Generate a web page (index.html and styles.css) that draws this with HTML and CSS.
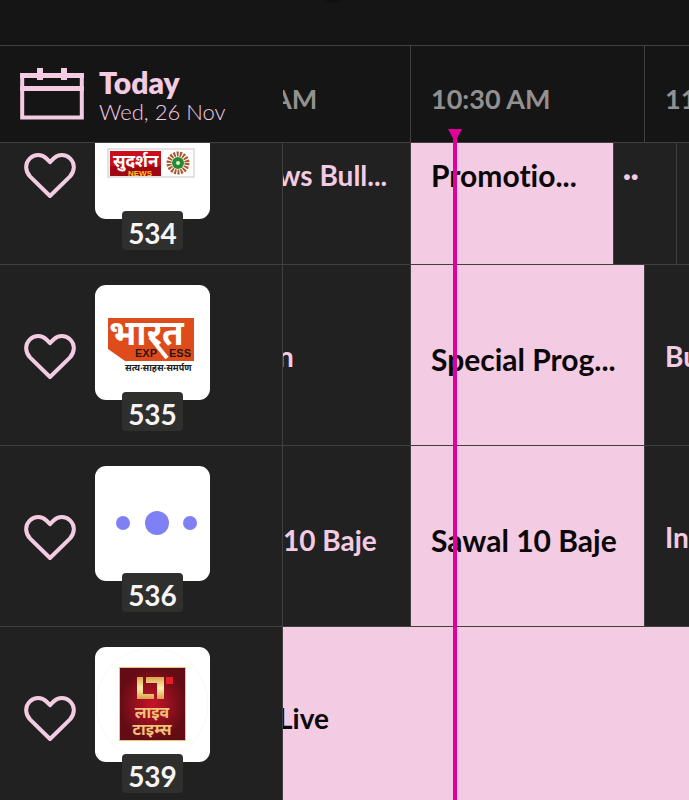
FILE: index.html
```html
<!DOCTYPE html>
<html lang="en">
<head>
<meta charset="utf-8">
<meta name="viewport" content="width=device-width, initial-scale=1">
<title>TV Guide</title>
<link rel="stylesheet" href="styles.css">
</head>
<body>
<svg class="defs" width="0" height="0" aria-hidden="true">
  <symbol id="heart" viewBox="0 0 52 46">
    <path d="M26 43 L6.200 23.600 C1 18.200 .8 10.400 5.700 5.600 C10.700 .8 17.800 1 22.400 5.500 L26 9.200 L29.600 5.500 C34.200 1 41.300 .8 46.300 5.600 C51.200 10.400 51 18.200 45.800 23.600 Z" fill="none" stroke="currentColor" stroke-width="4" stroke-linejoin="round"/>
  </symbol>
</svg>
<div class="guide">
  <div class="topbar"></div>
  <header class="head">
    <button class="date" type="button">
      <svg width="64" height="52" viewBox="0 0 64 52" aria-hidden="true">
        <path d="M2.200 7H61.800V49.500H2.200Z" fill="none" stroke="currentColor" stroke-width="4"/>
        <path d="M0 5H64V10H0ZM0 18H64V23H0ZM17 0H23V12H17ZM41 0H47V12H41Z" fill="currentColor"/>
      </svg>
      <span class="date-text"><strong>Today</strong><span>Wed, 26 Nov</span></span>
    </button>
    <div class="track times">
      <div class="cell first"><span class="cut">AM</span></div>
      <div class="cell half">10:30 AM</div>
      <div class="cell rest">11</div>
    </div>
  </header>
  <main class="body">
    <div class="rows">
      <section class="row">
        <div class="channel">
          <button class="fav" type="button" aria-label="Favourite 534"><svg width="52" height="46"><use href="#heart"/></svg></button>
          <div class="logo">
            <svg width="115" height="115" viewBox="0 0 115 115" aria-hidden="true">
              <rect x="13" y="45" width="86" height="28" fill="#fff" stroke="#c9c5c5"/>
              <rect x="15" y="47" width="51" height="25" fill="#c80f1b"/>
              <path d="M15 62H66V72H15Z" fill="#a00812"/>
              <text x="18" y="63" class="deva" font-size="17" fill="#fff">सुदर्शन</text>
              <text x="33" y="72" class="latin" font-size="8" fill="#ffc52e">NEWS</text>
              <circle cx="83" cy="59" r="9" fill="none" stroke="#a8582c" stroke-width="5" stroke-dasharray="2 1.140"/>
              <circle cx="83" cy="59" r="6" fill="#238b36"/><circle cx="83" cy="59" r="2" fill="#e8f1c4"/>
            </svg>
            <span class="num">534</span>
          </div>
        </div>
        <div class="track">
          <div class="cell first"><span class="cut">ws Bull...</span></div>
          <div class="cell live promo">Promotio...</div>
          <div class="cell brief"><span class="dots">··</span></div>
          <div class="cell rest"></div>
        </div>
      </section>
      <section class="row">
        <div class="channel">
          <button class="fav" type="button" aria-label="Favourite 535"><svg width="52" height="46"><use href="#heart"/></svg></button>
          <div class="logo">
            <svg width="115" height="115" viewBox="0 0 115 115" aria-hidden="true">
              <path d="M13 33H99V76H30L13 64Z" fill="#df4c1b"/>
              <text x="14" y="60" class="deva" font-size="35" fill="#fff">भारत</text>
              <text x="40" y="72" class="latin" font-size="11" fill="#2b1714">EXP</text>
              <text x="74" y="72" class="latin" font-size="11" fill="#2b1714">ESS</text>
              <path d="M55 52L72 73" stroke="#fff" stroke-width="4"/>
              <text x="30" y="86" class="deva" font-size="9" fill="#222">सत्य·साहस·समर्पण</text>
            </svg>
            <span class="num">535</span>
          </div>
        </div>
        <div class="track">
          <div class="cell first"><span class="cut">n</span></div>
          <div class="cell half live low">Special Prog...</div>
          <div class="cell rest">Bu</div>
        </div>
      </section>
      <section class="row">
        <div class="channel">
          <button class="fav" type="button" aria-label="Favourite 536"><svg width="52" height="46"><use href="#heart"/></svg></button>
          <div class="logo">
            <svg width="115" height="115" viewBox="0 0 115 115" aria-hidden="true" fill="#8080f5">
              <circle cx="28" cy="57" r="7"/><circle cx="62" cy="57" r="12"/><circle cx="95" cy="57" r="7"/>
            </svg>
            <span class="num">536</span>
          </div>
        </div>
        <div class="track">
          <div class="cell first low"><span>10 Baje</span></div>
          <div class="cell half live low">Sawal 10 Baje</div>
          <div class="cell rest">In</div>
        </div>
      </section>
      <section class="row">
        <div class="channel">
          <button class="fav" type="button" aria-label="Favourite 539"><svg width="52" height="46"><use href="#heart"/></svg></button>
          <div class="logo">
            <svg width="115" height="115" viewBox="0 0 115 115" aria-hidden="true">
              <defs>
                <radialGradient id="red"><stop offset="0" stop-color="#c8142a"/><stop offset="1" stop-color="#640c14"/></radialGradient>
                <linearGradient id="gold" x2="0" y2="1"><stop offset="0" stop-color="#d9a548"/><stop offset=".5" stop-color="#fff0b0"/><stop offset="1" stop-color="#d9a04a"/></linearGradient>
              </defs>
              <circle cx="57" cy="57" r="56" fill="none" stroke="#faf9f7"/>
              <rect x="24.500" y="20.500" width="66" height="73" fill="url(#red)" stroke="#e8c27a"/>
              <path d="M42 30H48V47H59V52H42ZM51 30H69V52H62V36H51Z" fill="url(#gold)"/>
              <rect x="71" y="30" width="7" height="7" fill="#e31d2b"/>
              <text x="57" y="71" text-anchor="middle" class="deva" font-size="16" fill="#efc378">लाइव</text>
              <text x="57" y="88" text-anchor="middle" class="deva" font-size="16" fill="#efc378">टाइम्स</text>
            </svg>
            <span class="num">539</span>
          </div>
        </div>
        <div class="track">
          <div class="cell rest live flush"><span class="cut">Live</span></div>
        </div>
      </section>
    </div>
  </main>
  <div class="now" aria-hidden="true"></div>
</div>
</body>
</html>
```
FILE: styles.css
```css
* { box-sizing: border-box; }

body {
  margin: 0;
  background: #151515;
  color: #f3cbe2;
  font-family: Lato, "Noto Sans", sans-serif;
  font-size: 28px;
  line-height: 36px;
  font-weight: 700;
  font-variant-ligatures: none;
}

button {
  border: 0;
  padding: 0;
  background: none;
  color: inherit;
  font: inherit;
  cursor: pointer;
}

svg { display: block; }
.defs { position: absolute; }

.guide {
  position: relative;
  height: 100vh;
  display: flex;
  flex-direction: column;
  overflow: hidden;
}

.topbar {
  height: 45px;
  flex: none;
  background: radial-gradient(ellipse 12px 4px at 333px 0, #0d0d0d, #151515);
}

.head {
  display: flex;
  flex: none;
  height: 98px;
  border-top: 1px solid #404040;
  border-bottom: 1px solid #404040;
}

.date {
  display: flex;
  align-items: center;
  gap: 15px;
  flex: none;
  width: 283px;
  padding-left: 20px;
  text-align: left;
}

.date-text {
  display: flex;
  flex-direction: column;
  font-size: 22px;
  line-height: 28px;
  font-weight: 300;
  padding-top: 4px;
}

.date-text strong {
  font-size: 30px;
  line-height: 32px;
  font-weight: 800;
}

.track {
  display: flex;
  flex: 1;
  min-width: 0;
  overflow: hidden;
}

.cell {
  flex: none;
  padding: 73px 0 0 20px;
  border-right: 1px solid #404040;
  white-space: nowrap;
  overflow: hidden;
}

.first { width: 128px; padding-left: 0; }
.half { width: 234px; }
.promo { width: 203px; }
.brief { width: 63px; padding-left: 9px; }
.rest { flex: 1; border-right: 0; }
.low { padding-top: 76px; }
.flush { padding-left: 0; }
.cut { margin-left: -5px; }

.times {
  color: #929090;
  font-size: 27px;
}
.times .cell { padding-top: 35px; }
.times .cut { margin-left: -10px; }

.body {
  flex: 1;
  min-height: 0;
  overflow: hidden;
  background: #212121;
}

/* The list is scrolled partway into its first row. */
.rows { margin-top: -59px; }

.row {
  display: flex;
  height: 181px;
  border-bottom: 1px solid #404040;
}

.channel {
  display: flex;
  flex: none;
  width: 283px;
  padding: 20px 0 0 24px;
  gap: 19px;
  border-right: 1px solid #404040;
}

.fav {
  align-self: flex-start;
  margin-top: 49px;
}

.logo {
  position: relative;
  width: 115px;
  height: 115px;
  border-radius: 11px;
  background: #fff;
}

.num {
  position: absolute;
  left: 27px;
  top: 107px;
  width: 61px;
  height: 39px;
  border-radius: 4px;
  background: #2f2f2e;
  color: #f5f5f7;
  line-height: 45px;
  text-align: center;
}

.live {
  background: #f3cbe2;
  color: #0a0808;
}

.live:not(.flush) { font-size: 30px; }

.dots { font-weight: 900; }

.deva {
  font-family: "Noto Sans Devanagari", "Noto Sans", sans-serif;
  font-weight: 700;
}

.latin {
  font-family: "Liberation Sans", sans-serif;
  font-weight: 700;
}

.now {
  position: absolute;
  left: 453px;
  top: 129px;
  bottom: 0;
  width: 4px;
  background: #e0009a;
}

.now::before {
  content: "";
  position: absolute;
  left: -5px;
  border: 7px solid transparent;
  border-top: 13px solid #e0009a;
  border-bottom: 0;
}
```
